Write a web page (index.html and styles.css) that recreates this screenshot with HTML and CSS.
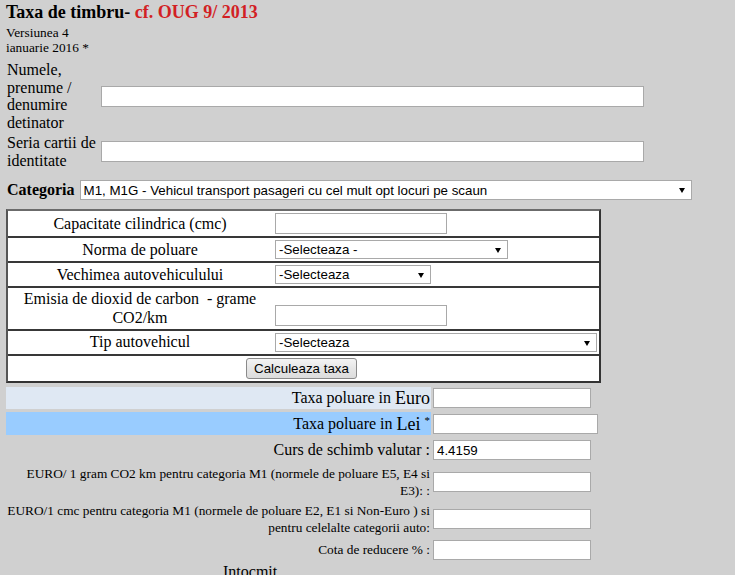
FILE: index.html
```html
<!DOCTYPE html>
<html lang="ro">
<head>
<meta charset="utf-8">
<title>Taxa de timbru</title>
<link rel="stylesheet" href="styles.css">
</head>
<body>
<div class="title">Taxa de timbru- <span class="red">cf. OUG 9/ 2013</span></div>
<div class="version">Versiunea 4<br>ianuarie 2016 *</div>

<div class="ident">
  <div class="ident-label">Numele, prenume / denumire detinator</div>
  <input class="txt ident-input" type="text">
  <div class="ident-label">Seria cartii de identitate</div>
  <input class="txt ident-input" type="text">
</div>

<div class="category">
  <b class="cat-label">Categoria</b>
  <span class="select-wrap">
    <select class="sel sel-cat">
      <option>M1, M1G - Vehicul transport pasageri cu cel mult opt locuri pe scaun</option>
    </select>
  </span>
</div>

<div class="calc">
  <div class="calc-row">
    <div class="calc-label">Capacitate cilindrica (cmc)</div>
    <div class="calc-field"><input class="txt in-short" type="text"></div>
  </div>
  <div class="calc-row">
    <div class="calc-label">Norma de poluare</div>
    <div class="calc-field"><span class="select-wrap"><select class="sel sel-norma"><option>-Selecteaza -</option></select></span></div>
  </div>
  <div class="calc-row">
    <div class="calc-label">Vechimea autovehiculului</div>
    <div class="calc-field"><span class="select-wrap"><select class="sel sel-vechime"><option>-Selecteaza</option></select></span></div>
  </div>
  <div class="calc-row">
    <div class="calc-label">Emisia de dioxid de carbon&nbsp; - grame CO2/km</div>
    <div class="calc-field field-bottom"><input class="txt in-short" type="text"></div>
  </div>
  <div class="calc-row">
    <div class="calc-label">Tip autovehicul</div>
    <div class="calc-field"><span class="select-wrap"><select class="sel sel-tip"><option>-Selecteaza</option></select></span></div>
  </div>
  <div class="calc-row calc-action">
    <button class="btn" type="button">Calculeaza taxa</button>
  </div>
</div>

<div class="results">
  <div class="res-label res-euro">Taxa poluare in&nbsp;<span class="big">Euro</span></div>
  <div class="res-field"><input class="txt res-input" type="text"></div>

  <div class="res-label res-lei">Taxa poluare in&nbsp;<span class="big">Lei</span>&nbsp;<sup class="star">*</sup></div>
  <div class="res-field"><input class="txt res-input res-wide" type="text"></div>

  <div class="res-label">Curs de schimb valutar :</div>
  <div class="res-field"><input class="txt res-input" type="text" value="4.4159"></div>

  <div class="res-label res-small">EURO/ 1 gram CO2 km pentru categoria M1 (normele de poluare E5, E4 si E3): :</div>
  <div class="res-field"><input class="txt res-input" type="text"></div>

  <div class="res-label res-small">EURO/1 cmc pentru categoria M1 (normele de poluare E2, E1 si Non-Euro ) si pentru celelalte categorii auto:</div>
  <div class="res-field"><input class="txt res-input" type="text"></div>

  <div class="res-label res-small">Cota de reducere % :</div>
  <div class="res-field"><input class="txt res-input" type="text"></div>
</div>

<div class="footer">Intocmit</div>
</body>
</html>
```

FILE: styles.css
```css
html {
  overflow: hidden;
}

body {
  margin: 0;
  padding: 2px 6px 0;
  background: #d0d0d0;
  color: #000;
  font-family: "Liberation Serif", "Times New Roman", serif;
}

.title {
  font-size: 18px;
  line-height: 21px;
  font-weight: bold;
  margin-bottom: 2px;
}

.red {
  color: #d21f24;
}

.version {
  font-size: 13.33px;
  line-height: 15px;
}

/* inputs & selects */
.txt {
  box-sizing: border-box;
  height: 21px;
  margin: 0;
  padding: 0 3px;
  border: 1px solid #a9a9a9;
  background: #fff;
  font-family: "Liberation Sans", Arial, sans-serif;
  font-size: 13.33px;
  color: #000;
}

.select-wrap {
  position: relative;
  display: inline-flex;
}

.select-wrap::after {
  content: "";
  position: absolute;
  right: 7px;
  top: 50%;
  margin-top: -2px;
  border-left: 3px solid transparent;
  border-right: 3px solid transparent;
  border-top: 5px solid #000;
  pointer-events: none;
}

.sel {
  box-sizing: border-box;
  -webkit-appearance: none;
  appearance: none;
  height: 19px;
  margin: 0;
  padding: 0 18px 0 3px;
  border: 1px solid #a9a9a9;
  border-radius: 0;
  background: #fff;
  font-family: "Liberation Sans", Arial, sans-serif;
  font-size: 13.33px;
  color: #000;
}

/* identification block */
.ident {
  display: grid;
  grid-template-columns: 95px 543px;
  row-gap: 2px;
  align-items: center;
  margin-top: 6px;
  font-size: 16px;
  line-height: 17.7px;
}

.ident-label {
  padding-left: 1px;
}

.ident-input {
  width: 543px;
}

/* category */
.category {
  display: flex;
  align-items: center;
  gap: 5px;
  margin-top: 11px;
  font-size: 16px;
  line-height: 17.7px;
}

.cat-label {
  padding-left: 1px;
}

.sel-cat {
  width: 612px;
  height: 20px;
}

/* calculator table */
.calc {
  box-sizing: border-box;
  width: 595px;
  margin-top: 9px;
  background: #fff;
  border: 2px solid #333;
  border-top-color: #6b6b6b;
  border-left-color: #555;
}

.calc-row {
  display: grid;
  grid-template-columns: 264px 1fr;
  align-items: center;
  padding: 2px 0;
  border-bottom: 2px solid #383838;
  font-size: 16px;
  line-height: 18.4px;
}

.calc-row:last-child {
  border-bottom: 0;
}

.calc-label {
  text-align: center;
}

.calc-field {
  display: flex;
  padding-left: 3px;
}

.field-bottom {
  align-self: end;
  padding-bottom: 1px;
}

.in-short {
  width: 172px;
}

.sel-norma {
  width: 233px;
}

.sel-vechime {
  width: 156px;
}

.sel-tip {
  width: 322px;
}

.calc-action {
  display: flex;
  justify-content: center;
}

.btn {
  box-sizing: border-box;
  height: 21px;
  padding: 0 7px;
  margin: 0 4px 0 0;
  border: 1px solid #8a8a8a;
  border-radius: 3px;
  background: linear-gradient(#f4f4f4, #e6e6e6 50%, #dcdcdc);
  font-family: "Liberation Sans", Arial, sans-serif;
  font-size: 13.33px;
  color: #000;
}

/* results */
.results {
  display: grid;
  grid-template-columns: 425px auto;
  grid-template-rows: 22px 23px 24px 34px 34px 21px;
  column-gap: 2px;
  row-gap: 3px;
  margin-top: 4px;
  font-size: 16px;
}

.res-label {
  display: flex;
  align-items: center;
  justify-content: flex-end;
  text-align: right;
  padding-right: 1px;
  line-height: 18px;
}

.res-euro {
  background: #dfe8f3;
}

.res-lei {
  background: #99ccff;
}

.big {
  font-size: 18px;
}

.star {
  font-size: 11px;
  line-height: 0;
  position: relative;
  top: -4px;
  vertical-align: top;
}

.res-small {
  font-size: 13.33px;
  line-height: 17px;
}

.res-field {
  display: flex;
  align-items: center;
}

.res-input {
  width: 158px;
  height: 20px;
}

.res-wide {
  width: 165px;
}

.footer {
  margin-top: 3px;
  padding-left: 217px;
  font-size: 16px;
}
```
